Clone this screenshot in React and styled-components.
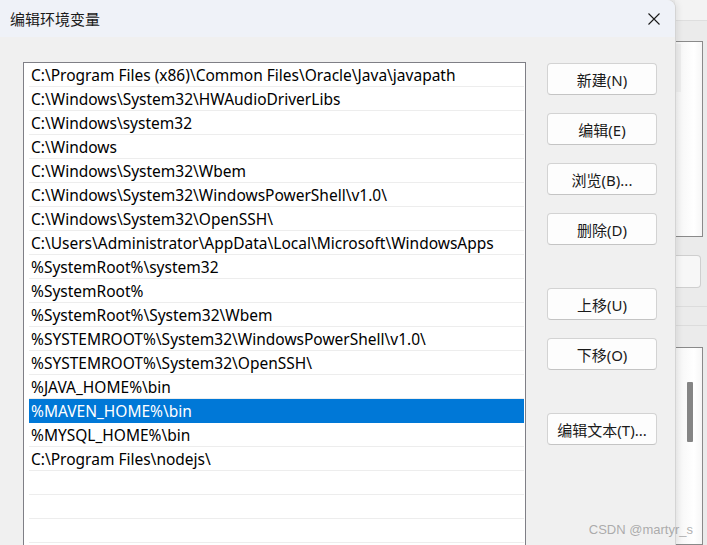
import React from "react";
import styled, { createGlobalStyle } from "styled-components";

const GlobalStyle = createGlobalStyle`
  html, body {
    margin: 0;
    padding: 0;
    background: #ececec;
  }
  body {
    font-family: "Noto Sans", "Noto Sans CJK SC", sans-serif;
  }
`;

const paths = [
  "C:\\Program Files (x86)\\Common Files\\Oracle\\Java\\javapath",
  "C:\\Windows\\System32\\HWAudioDriverLibs",
  "C:\\Windows\\system32",
  "C:\\Windows",
  "C:\\Windows\\System32\\Wbem",
  "C:\\Windows\\System32\\WindowsPowerShell\\v1.0\\",
  "C:\\Windows\\System32\\OpenSSH\\",
  "C:\\Users\\Administrator\\AppData\\Local\\Microsoft\\WindowsApps",
  "%SystemRoot%\\system32",
  "%SystemRoot%",
  "%SystemRoot%\\System32\\Wbem",
  "%SYSTEMROOT%\\System32\\WindowsPowerShell\\v1.0\\",
  "%SYSTEMROOT%\\System32\\OpenSSH\\",
  "%JAVA_HOME%\\bin",
  "%MAVEN_HOME%\\bin",
  "%MYSQL_HOME%\\bin",
  "C:\\Program Files\\nodejs\\",
  "",
  "",
  "",
];

const buttons = [
  { label: "新建(N)" },
  { label: "编辑(E)" },
  { label: "浏览(B)..." },
  { label: "删除(D)" },
  { label: "上移(U)", spaced: true },
  { label: "下移(O)" },
  { label: "编辑文本(T)...", spaced: true },
];

const Screen = styled.div`
  position: relative;
  display: flex;
  width: 707px;
  height: 545px;
  overflow: hidden;
`;

const Dialog = styled.div`
  width: 675px;
  flex-shrink: 0;
  display: flex;
  flex-direction: column;
  background: #f0f0f0;
  border-top-right-radius: 8px;
  box-shadow: 1px 0 0 #d4d4d4, 3px 0 6px rgba(0, 0, 0, 0.08);
  position: relative;
  z-index: 1;
  overflow: hidden;
`;

const TitleBar = styled.div`
  height: 37px;
  flex-shrink: 0;
  display: flex;
  align-items: center;
  justify-content: space-between;
  padding: 0 15px 0 10px;
  background: #eff2f8;
`;

const Title = styled.span`
  font-size: 15px;
  color: #1a1a1a;
`;

const CloseIcon = () => (
  <svg width="12" height="12" viewBox="0 0 12 12">
    <path d="M0.5 0.5 L11.5 11.5 M11.5 0.5 L0.5 11.5" stroke="#1a1a1a" strokeWidth="1.1" />
  </svg>
);

const Body = styled.div`
  flex: 1;
  display: flex;
  align-items: flex-start;
  padding: 25px 0 0 23px;
`;

const List = styled.div`
  width: 503px;
  height: 520px;
  box-sizing: border-box;
  border: 1px solid #7f7f86;
  background: #ffffff;
  padding: 0 1px 0 5px;
`;

const Row = styled.div`
  height: 24px;
  box-sizing: border-box;
  border-bottom: 1px solid ${({ selected }) => (selected ? "#0078d7" : "#ededed")};
  background: ${({ selected }) => (selected ? "#0078d7" : "transparent")};
  color: ${({ selected }) => (selected ? "#ffffff" : "#000000")};
  font-size: 15.5px;
  line-height: 25px;
  padding-left: 2px;
  white-space: nowrap;
  overflow: hidden;
`;

const ButtonColumn = styled.div`
  display: flex;
  flex-direction: column;
  margin: 1px 0 0 21px;
`;

const Button = styled.button`
  width: 110px;
  height: 32px;
  box-sizing: border-box;
  margin-top: ${({ spaced }) => (spaced ? "43px" : "18px")};
  &:first-child {
    margin-top: 0;
  }
  border: 1px solid #d3d3d3;
  border-bottom-color: #c4c4c4;
  border-radius: 4px;
  background: #fdfdfd;
  font-family: "Noto Sans", "Noto Sans CJK SC", sans-serif;
  font-size: 15px;
  color: #1a1a1a;
  padding: 0;
`;

const BackWindow = styled.div`
  flex: 1;
  display: flex;
  flex-direction: column;
  background: #ebebeb;
`;

const BackTop = styled.div`
  height: 20px;
  background: #f3f3f3;
  border-bottom: 1px solid #dedede;
`;

const BackGap = styled.div`
  height: ${({ h }) => h}px;
  border-bottom: ${({ line }) => (line ? "1px solid #dcdcdc" : "none")};
`;

const BackBox = styled.div`
  height: ${({ h }) => h}px;
  margin-right: 4px;
  border: 1px solid #8a8a8a;
  border-left: none;
  background: linear-gradient(90deg, #f4f4f4 0%, #ffffff 70%, #f6f6f6 100%);
  display: flex;
  padding-top: ${({ pad }) => pad}px;
  box-sizing: border-box;
`;

const Track = styled.div`
  width: 6px;
  background: #eeeeee;
  height: 48px;
`;

const Thumb = styled.div`
  width: 6px;
  height: 60px;
  margin: 34px 0 0 12px;
  background: #858585;
  border-radius: 1px;
`;

const BackButton = styled.div`
  height: 31px;
  margin-right: 6px;
  border: 1px solid #cfcfcf;
  border-left: none;
  border-radius: 0 4px 4px 0;
  background: #f7f7f7;
`;

const Watermark = styled.div`
  position: absolute;
  right: 14px;
  bottom: 8px;
  z-index: 2;
  font-family: "Liberation Sans", Arial, sans-serif;
  font-size: 13px;
  color: rgba(140, 140, 140, 0.7);
`;

export default function App() {
  return (
    <>
      <GlobalStyle />
      <Screen>
        <Dialog>
          <TitleBar>
            <Title>编辑环境变量</Title>
            <CloseIcon />
          </TitleBar>
          <Body>
            <List>
              {paths.map((p, i) => (
                <Row key={i} selected={i === 14}>
                  {p}
                </Row>
              ))}
            </List>
            <ButtonColumn>
              {buttons.map((b) => (
                <Button key={b.label} spaced={b.spaced}>
                  {b.label}
                </Button>
              ))}
            </ButtonColumn>
          </Body>
        </Dialog>
        <BackWindow>
          <BackTop />
          <BackGap h={20} />
          <BackBox h={199} pad={2}>
            <Track />
          </BackBox>
          <BackGap h={18} />
          <BackButton />
          <BackGap h={18} line />
          <BackGap h={19} line />
          <BackGap h={21} />
          <BackBox h={200} pad={0}>
            <Thumb />
          </BackBox>
        </BackWindow>
        <Watermark>CSDN @martyr_s</Watermark>
      </Screen>
    </>
  );
}
